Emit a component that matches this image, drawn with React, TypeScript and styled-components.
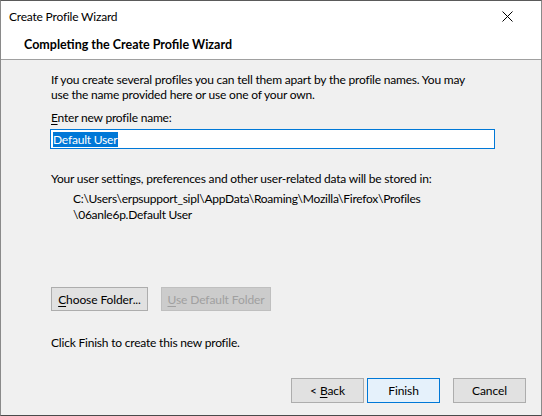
import React from 'react';
import styled, { createGlobalStyle } from 'styled-components';

const GlobalStyle = createGlobalStyle`
	html, body {
		margin: 0;
		padding: 0;
		background: #ffffff;
	}
	body {
		font-family: 'Lato', 'Noto Sans', 'Liberation Sans', sans-serif;
		font-size: 12px;
		letter-spacing: -0.2px;
		color: #000000;
	}
`;

const Window = styled.div`
	box-sizing: border-box;
	width: 542px;
	height: 416px;
	display: flex;
	flex-direction: column;
	border: 1px solid #8a8a8a;
	border-top-color: #5a5a5a;
	border-bottom-color: #4a4a4a;
	background: #f0f0f0;
	overflow: hidden;
`;

const TitleBar = styled.div`
	height: 29px;
	display: flex;
	align-items: center;
	justify-content: space-between;
	padding: 1px 0 0 8px;
	background: #ffffff;
`;

const Title = styled.span`
	font-size: 12px;
	line-height: 15px;
`;

const CloseButton = styled.div`
	width: 46px;
	height: 29px;
	display: flex;
	align-items: center;
	justify-content: center;
	margin-right: 11px;
`;

const Header = styled.div`
	height: 28px;
	display: flex;
	align-items: center;
	padding-left: 23px;
	background: #ffffff;
	border-bottom: 1px solid #a0a0a0;
`;

const HeaderTitle = styled.h1`
	margin: 0;
	font-size: 12.5px;
	font-weight: 700;
	letter-spacing: 0;
	line-height: 15px;
	padding-bottom: 1px;
`;

const Body = styled.div`
	flex: 1;
	display: flex;
	flex-direction: column;
	padding: 12px 48px 0 50px;
`;

const Paragraph = styled.p<{ $top?: number }>`
	margin: ${({ $top }) => $top ?? 0}px 0 0;
	line-height: 15px;
`;

const Path = styled.div`
	margin: 5px 0 0 22px;
	line-height: 16px;
	letter-spacing: -0.25px;
`;

const Key = styled.u`
	text-decoration-thickness: 1px;
	text-underline-offset: 2px;
`;

const TextBox = styled.div`
	box-sizing: border-box;
	width: 445px;
	height: 20px;
	margin: 4px 0 0 -1px;
	padding: 1px 2px;
	display: flex;
	align-items: center;
	background: #ffffff;
	border: 1px solid #0078d7;
`;

const Selection = styled.span`
	background: #0078d7;
	color: #ffffff;
	line-height: 15px;
	padding-right: 1px;
`;

const ButtonRow = styled.div<{ $top: number }>`
	display: flex;
	gap: 13px;
	margin-top: ${({ $top }) => $top}px;
`;

const Button = styled.button<{ $width: number; $height?: number; $primary?: boolean }>`
	box-sizing: border-box;
	width: ${({ $width }) => $width}px;
	height: ${({ $height }) => $height ?? 24}px;
	padding: 0 4px;
	font-family: inherit;
	font-size: 12px;
	letter-spacing: -0.1px;
	color: #000000;
	background: ${({ $primary }) => ($primary ? '#e5f1fb' : '#e1e1e1')};
	border: 1px solid ${({ $primary }) => ($primary ? '#0078d7' : '#adadad')};
	border-radius: 0;
	cursor: default;

	&:disabled {
		color: #a0a0a0;
		background: #cccccc;
		border-color: #bfbfbf;
	}
`;

const Footer = styled.div`
	display: flex;
	justify-content: flex-end;
	align-items: center;
	padding: 0 15px 12px 0;
`;

const NavGroup = styled.div`
	display: flex;
	gap: 3px;
	margin-right: 13px;
`;

const CloseIcon: React.FC = () => (
	<svg width="11" height="11" viewBox="0 0 11 11">
		<path d="M0.5 0.5 L10.5 10.5 M10.5 0.5 L0.5 10.5" stroke="#000" strokeWidth="1" fill="none" />
	</svg>
);

const App: React.FC = () => (
	<>
		<GlobalStyle />
		<Window>
			<TitleBar>
				<Title>Create Profile Wizard</Title>
				<CloseButton>
					<CloseIcon />
				</CloseButton>
			</TitleBar>
			<Header>
				<HeaderTitle>Completing the Create Profile Wizard</HeaderTitle>
			</Header>
			<Body>
				<Paragraph>
					If you create several profiles you can tell them apart by the profile names. You may
					<br />
					use the name provided here or use one of your own.
				</Paragraph>
				<Paragraph $top={8}>
					<Key>E</Key>nter new profile name:
				</Paragraph>
				<TextBox>
					<Selection>Default User</Selection>
				</TextBox>
				<Paragraph $top={22}>
					Your user settings, preferences and other user-related data will be stored in:
				</Paragraph>
				<Path>
					C:\Users\erpsupport_sipl\AppData\Roaming\Mozilla\Firefox\Profiles
					<br />
					\06anle6p.Default User
				</Path>
				<ButtonRow $top={64}>
					<Button $width={97}>
						<Key>C</Key>hoose Folder...
					</Button>
					<Button $width={110} disabled>
						<Key>U</Key>se Default Folder
					</Button>
				</ButtonRow>
				<Paragraph $top={24}>Click Finish to create this new profile.</Paragraph>
			</Body>
			<Footer>
				<NavGroup>
					<Button $width={73} $height={25}>
						&lt; <Key>B</Key>ack
					</Button>
					<Button $width={73} $height={25} $primary>
						Finish
					</Button>
				</NavGroup>
				<Button $width={73} $height={25}>
					Cancel
				</Button>
			</Footer>
		</Window>
	</>
);

export default App;
